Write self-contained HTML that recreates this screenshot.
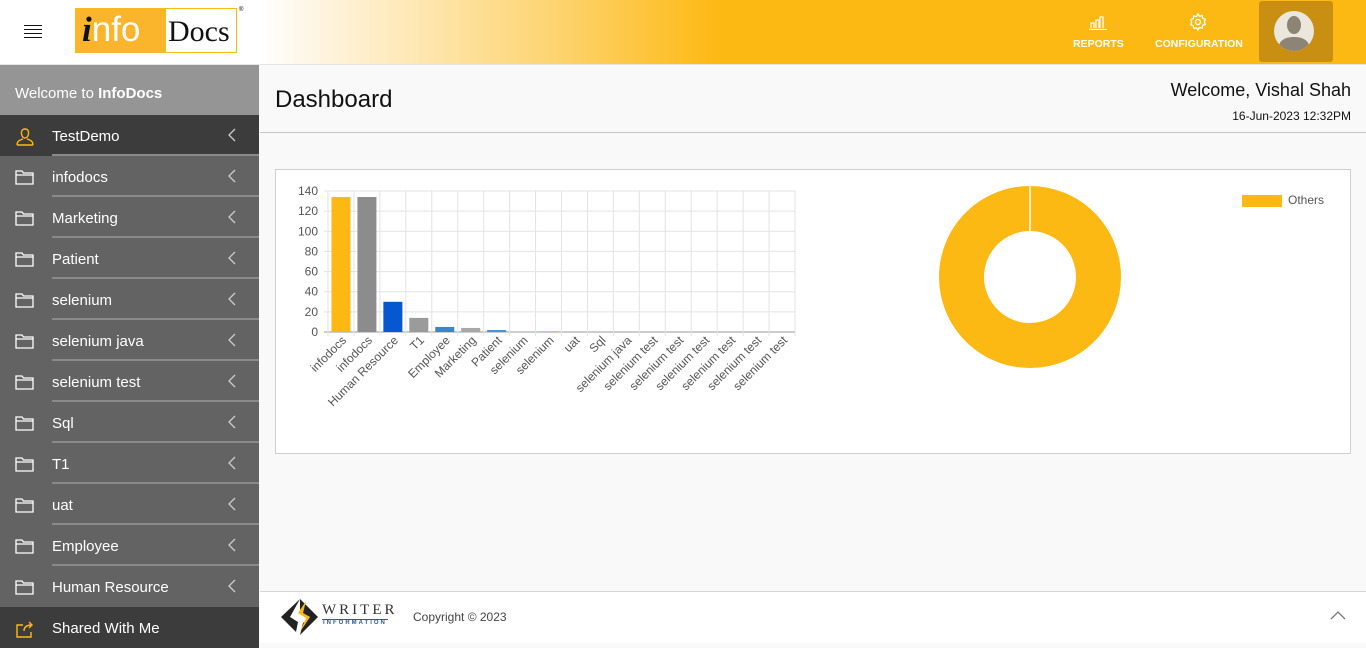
<!DOCTYPE html>
<html><head><meta charset="utf-8"><style>
*{margin:0;padding:0;box-sizing:border-box}
body{width:1366px;height:643px;overflow:hidden;font-family:"Liberation Sans",Arial,sans-serif;background:#f9f9f9;position:relative}
.top{position:absolute;left:0;top:0;width:1366px;height:65px;background:linear-gradient(90deg,#fff 0,#fff 260px,#fef3dc 330px,#fdd36e 560px,#fdb913 720px,#fdb913 100%);border-bottom:1px solid #e6e6e6}
.side{position:absolute;left:0;top:65px;width:259px;height:578px;background:#636363}
.wel{height:50px;background:#959595;color:#fff;font-size:15px;padding:20px 0 0 15px}
.it{position:absolute;left:0;width:259px;height:41px;color:#fff;font-size:15px}
.it .t{position:absolute;left:52px;top:13px}
.it .ln{position:absolute;left:52px;right:0;bottom:0;height:2px;background:#8a8a8a}
.it .ch{position:absolute;left:227px;top:13px;width:10px;height:14px}
.it .ic{position:absolute;left:15px;top:13px}
</style></head><body>
<div class="top">
 <div style="position:absolute;left:24px;top:25px;width:18px">
  <div style="height:1px;background:#111;margin-bottom:3px"></div><div style="height:1px;background:#111;margin-bottom:3px"></div><div style="height:1px;background:#111;margin-bottom:3px"></div><div style="height:1px;background:#111"></div></div>
 <div style="position:absolute;left:75px;top:8px;width:162px;height:45px;border:1px solid #fdb913;background:#fff">
  <div style="position:absolute;left:0;top:0;width:90px;height:44px;background:#fbb52c;font-size:35px;color:#fff;line-height:42px;padding-left:6px"><span style="color:#111;font-style:italic;font-family:'Liberation Serif',serif;font-weight:bold">i</span>nfo</div>
  <div style="position:absolute;left:92px;top:6px;font-family:'Liberation Serif',serif;font-size:30px;color:#111">Docs</div>
 </div>
 <div style="position:absolute;left:239px;top:7px;font-size:6px">®</div>
 <svg style="position:absolute;left:1088px;top:14px" width="20" height="16" viewBox="0 0 20 16" fill="none" stroke="#fff" stroke-width="1.2"><path d="M3 14V9h3v5M8 14V6h3v8M12 14V3h3v11M1 15.5h18"/></svg>
 <div style="position:absolute;left:1073px;top:38px;color:#fff;font-size:10.5px;font-weight:bold">REPORTS</div>
 <svg style="position:absolute;left:1188px;top:12px" width="20" height="20" viewBox="0 0 20 20" fill="none" stroke="#fff" stroke-width="1.3"><circle cx="10" cy="10" r="2.5"/><path d="M10 2l1.5 2.3 2.7-.7.5 2.7 2.6 1-1 2.6 1 2.5-2.6 1-.5 2.8-2.7-.8L10 18l-1.5-2.3-2.7.7-.5-2.7-2.6-1 1-2.6-1-2.5 2.6-1 .5-2.8 2.7.8z"/></svg>
 <div style="position:absolute;left:1155px;top:38px;color:#fff;font-size:10.5px;font-weight:bold">CONFIGURATION</div>
 <div style="position:absolute;left:1259px;top:1px;width:74px;height:61px;background:#c88f12;border-radius:3px"></div>
 <svg style="position:absolute;left:1274px;top:11px" width="40" height="40" viewBox="0 0 40 40"><circle cx="20" cy="20" r="20" fill="#ece7dc"/><clipPath id="c"><circle cx="20" cy="20" r="20"/></clipPath><g clip-path="url(#c)" fill="#8c8475"><ellipse cx="20" cy="14" rx="7" ry="9"/><path d="M4 40c0-10 6-14 16-14s16 4 16 14z"/></g></svg>
</div>
<div class="side">
 <div class="wel">Welcome to <b>InfoDocs</b></div>
</div>
<div id="items"></div>
<div style="position:absolute;left:260px;top:66px;width:1106px;height:67px;border-bottom:1px solid #c8c8c8"></div>
<div style="position:absolute;left:275px;top:86px;font-size:24px;color:#111">Dashboard</div>
<div style="position:absolute;right:15px;top:80px;font-size:18px;color:#111">Welcome, Vishal Shah</div>
<div style="position:absolute;right:15px;top:109px;font-size:12px;color:#111">16-Jun-2023 12:32PM</div>
<div style="position:absolute;left:275px;top:169px;width:1076px;height:285px;background:#fff;border:1px solid #cfcfcf"></div>
<svg style="position:absolute;left:0;top:0" width="1366" height="643" id="ch" font-family="Liberation Sans, Arial, sans-serif"></svg>
<div style="position:absolute;left:260px;top:591px;width:1106px;height:52px;background:#fff;border-top:1px solid #d6d6d6"></div>
<svg style="position:absolute;left:280px;top:597px" width="40" height="40" viewBox="0 0 40 40"><path d="M20 2L1 20l15 15 2-10-8-5z" fill="#222"/><path d="M20 2l18 18-18 18 3-12 7-6-10-5z" fill="#222"/><path d="M26 4l-8 12 8 5-6 14 10-15-7-4z" fill="#fdb913"/></svg>
<div style="position:absolute;left:322px;top:602px;font-family:'Liberation Serif',serif;font-size:15px;letter-spacing:3px;color:#333">WRITER</div>
<div style="position:absolute;left:322px;top:619px;width:66px;height:1px;background:#555"></div>
<div style="position:absolute;left:323px;top:620px;font-size:6px;letter-spacing:2px;color:#2a5b9a;font-weight:bold">INFORMATION</div>
<div style="position:absolute;left:413px;top:610px;font-size:12px;color:#444">Copyright © 2023</div>
<svg style="position:absolute;left:1330px;top:610px" width="16" height="10"><path d="M1 9l7-7 7 7" fill="none" stroke="#777" stroke-width="1.3"/></svg>
<script>
var names=["TestDemo","infodocs","Marketing","Patient","selenium","selenium java","selenium test","Sql","T1","uat","Employee","Human Resource","Shared With Me"];
var h="";
names.forEach(function(n,i){
 var y=115+i*41,bg=(i==0||i==12)?"#3c3c3c":"#636363";
 var ic=i==0?'<svg class="ic" width="20" height="18" viewBox="0 0 20 18" fill="none" stroke="#fdb913" stroke-width="1.4"><path d="M10 1c3 0 4 2.5 3.5 5S12 10 10 10 7 8.5 6.5 6 7 1 10 1zM2 17c0-4 3-5 6-6M18 17c0-4-3-5-6-6M2 17h16"/></svg>':
  i==12?'<svg class="ic" width="20" height="18" viewBox="0 0 20 18" fill="none" stroke="#fdb913" stroke-width="1.4"><path d="M8 5H2v12h14v-5M9 11c0-4 3-6 8-6M14 2l3 3-3 3"/></svg>':
  '<svg class="ic" width="19" height="16" viewBox="0 0 19 16" fill="none" stroke="#fff" stroke-width="1.3"><path d="M1 2h6l1.5 2H18v11H1zM1 6h17"/></svg>';
 h+='<div class="it" style="top:'+y+'px;background:'+bg+'">'+ic+'<span class="t">'+n+'</span>'+(i<11?'<div class="ln"></div>':'')+(i<12?'<svg class="ch" viewBox="0 0 10 14"><path d="M8 1L2 7l6 6" fill="none" stroke="#ccc" stroke-width="1.3"/></svg>':'')+'</div>';
});
document.getElementById("items").innerHTML=h;
var s="",x0=328,x1=795,y0=332,w=(x1-x0)/18,k=141/140;
for(var v=0;v<=140;v+=20){var y=y0-v*k;s+='<line x1="'+(x0-4)+'" x2="'+x1+'" y1="'+y+'" y2="'+y+'" stroke="'+(v?"#e3e3e3":"#999")+'"/><text x="318" y="'+(y+4)+'" font-size="12" fill="#555" text-anchor="end">'+v+'</text>';}
for(var i=0;i<=18;i++){var x=x0+i*w;s+='<line x1="'+x+'" x2="'+x+'" y1="191" y2="336" stroke="#e3e3e3"/>';}
var vals=[134,134,30,14,5,4,2,1,1,0,0,0,0,0,0,0,0,0],cols=["#fdb913","#8c8c8c","#0757d0","#9b9b9b","#3a87c8","#a8a8a8","#4a94d6","#d0d0d0","#a9cbe8"];
var labs=["infodocs","infodocs","Human Resource","T1","Employee","Marketing","Patient","selenium","selenium","uat","Sql","selenium java","selenium test","selenium test","selenium test","selenium test","selenium test","selenium test"];
for(var i=0;i<18;i++){var cx=x0+(i+0.5)*w;if(vals[i])s+='<rect x="'+(cx-9.5)+'" y="'+(y0-vals[i]*k)+'" width="19" height="'+(vals[i]*k)+'" fill="'+cols[i]+'"/>';
 s+='<text transform="translate('+(cx+6)+',341) rotate(-45)" font-size="12" fill="#555" text-anchor="end">'+labs[i]+'</text>';}
s+='<circle cx="1030" cy="277" r="68.5" fill="none" stroke="#fdb913" stroke-width="45"/><line x1="1030" x2="1030" y1="186" y2="232" stroke="#fff" stroke-width="1.5"/>';
s+='<rect x="1242" y="195" width="40" height="12" fill="#fdb913"/><text x="1288" y="204" font-size="12" fill="#555">Others</text>';
document.getElementById("ch").innerHTML=s;
</script>
</body></html>
